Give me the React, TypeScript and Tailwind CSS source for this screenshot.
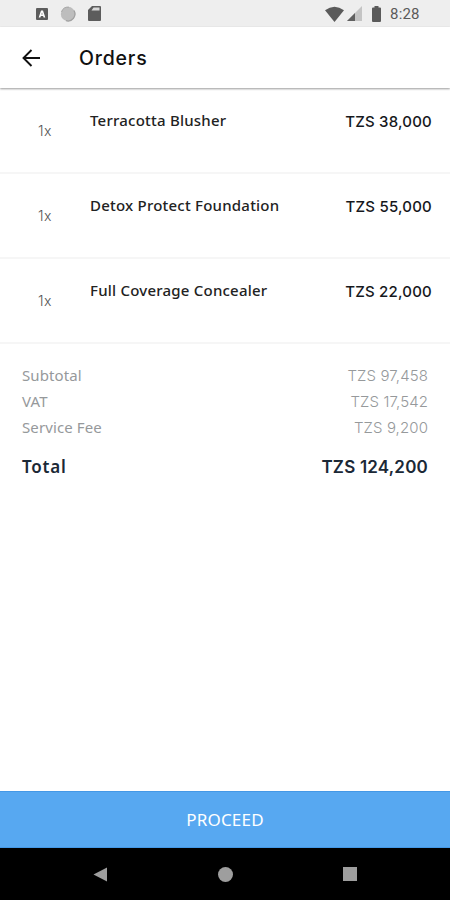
import React from 'react';

const formatPrice = (value: number) => `TZS ${value.toLocaleString('en-US')}`;

const items = [
  { name: 'Terracotta Blusher', qty: 1, price: 38000 },
  { name: 'Detox Protect Foundation', qty: 1, price: 55000 },
  { name: 'Full Coverage Concealer', qty: 1, price: 22000 },
];

const fees = [
  { label: 'Subtotal', value: 97458 },
  { label: 'VAT', value: 17542 },
  { label: 'Service Fee', value: 9200 },
];

function StatusBar() {
  return (
    <div className="flex h-[27px] shrink-0 items-center justify-between bg-[#eeeeee] pl-9 pr-[30px]">
      <div className="flex items-center">
        <svg width="12" height="12" viewBox="0 0 12 12">
          <rect width="12" height="12" rx="1" fill="#5c5c5c" />
          <path d="M2.7 9.5 5 2.5h2L9.3 9.5H7.6L7.1 8H4.9l-.5 1.5zM5.4 6.6h1.2L6 4.6z" fill="#fff" />
        </svg>
        <svg className="ml-[12px]" width="16" height="16" viewBox="0 0 16 16">
          <circle cx="8" cy="8" r="7.2" fill="#bdbdbd" />
          <path d="M14 4.5A7 7 0 0 1 6 14.7" fill="none" stroke="#a0a0a0" strokeWidth="1.3" />
          <path d="M1.5 6A7 7 0 0 1 9 1.2" fill="none" stroke="#a8a8a8" />
        </svg>
        <svg className="ml-[12px]" width="13" height="15" viewBox="0 0 13 15">
          <path d="M4 0h8q1 0 1 1v13q0 1-1 1H1q-1 0-1-1V4z" fill="#5c5c5c" />
          <path d="M5.5 1.5h6v3h-8z" fill="#d8d8d8" />
        </svg>
      </div>
      <div className="flex items-center">
        <svg width="19" height="16" viewBox="0 0 19 16">
          <path d="M0 4.2Q9.5-2.8 19 4.2L9.5 16z" fill="#5a5a5a" />
        </svg>
        <svg className="ml-[3px]" width="15" height="15" viewBox="0 0 15 15">
          <path d="M15 0v15H0z" fill="#c4c4c4" />
          <path d="M8 7v8H0z" fill="#606060" />
        </svg>
        <svg className="ml-[10px]" width="9" height="16" viewBox="0 0 9 16">
          <path d="M2.5 0h4v1.5H8q1 0 1 1V15q0 1-1 1H1q-1 0-1-1V2.5q0-1 1-1h1.5z" fill="#5a5a5a" />
        </svg>
        <span className="ml-[9px] mt-px w-[30px] whitespace-nowrap font-['Roboto',sans-serif] text-[15px] leading-none tracking-[0.2px] text-[#5a5a5a]">
          8:28
        </span>
      </div>
    </div>
  );
}

function Header() {
  return (
    <div className="relative flex h-[61px] shrink-0 items-center bg-white pl-[22px] shadow-[0_1px_2px_rgba(0,0,0,0.4)]">
      <svg width="18" height="18" viewBox="0 0 18 18" fill="none" stroke="#111" strokeWidth="1.9">
        <path d="M9.5 1 1.5 9l8 8M1.5 9H18" />
      </svg>
      <h1 className="ml-[39px] mt-[3px] font-['Inter',sans-serif] text-[19.5px] font-medium tracking-[0.8px] text-[#111]">Orders</h1>
    </div>
  );
}

function NavBar() {
  return (
    <div className="flex h-[52px] shrink-0 items-center justify-between bg-black px-[93px]">
      <svg width="14" height="15" viewBox="0 0 14 15">
        <path d="M14 .5v14L.5 7.5z" fill="#9e9e9e" />
      </svg>
      <div className="h-[15px] w-[15px] rounded-full bg-[#9e9e9e]" />
      <div className="h-3.5 w-3.5 bg-[#9e9e9e]" />
    </div>
  );
}

export default function App() {
  const total = fees.reduce((sum, fee) => sum + fee.value, 0);

  return (
    <div className="flex h-[900px] w-[450px] flex-col overflow-hidden bg-white font-['Noto_Sans',sans-serif]">
      <StatusBar />
      <Header />

      {/* Items */}
      <div className="flex flex-col pt-px">
        {items.map((item) => (
          <div key={item.name} className="flex h-[85px] items-start border-b-2 border-[#f6f6f6] pl-[38px] pr-[18px]">
            <span className="mt-[32px] w-[52px] font-['Inter',sans-serif] text-[14px] font-light leading-5 tracking-[0.5px] text-[#555]">{item.qty}x</span>
            <span className="mt-[21px] flex-1 whitespace-nowrap text-[15px] font-medium leading-5 tracking-[0.22px] text-[#222]">{item.name}</span>
            <span className="mt-[23px] whitespace-nowrap font-['Inter',sans-serif] text-[15px] font-medium leading-5 tracking-[0.2px] text-[#16181c]">
              {formatPrice(item.price)}
            </span>
          </div>
        ))}
      </div>

      {/* Totals */}
      <div className="flex flex-1 flex-col px-[22px] pt-[19px]">
        {fees.map((fee) => (
          <div key={fee.label} className="flex h-[26px] items-center justify-between text-[15px] text-[#96999b]">
            <span className="-mt-px tracking-[0.1px]">{fee.label}</span>
            <span className="font-['Inter',sans-serif] font-light tracking-[0.1px]">{formatPrice(fee.value)}</span>
          </div>
        ))}
        <div className="mt-[13px] flex h-[26px] items-center justify-between text-[#1b2836]">
          <span className="text-[17px] font-semibold tracking-[0.8px]">Total</span>
          <span className="mt-0.5 font-['Inter',sans-serif] text-[17px] font-semibold tracking-[0.2px]">{formatPrice(total)}</span>
        </div>
      </div>

      <button className="h-[57px] shrink-0 border-y border-[#4498e6] bg-[#57a8f1] text-[17px] tracking-[0.2px] text-white">PROCEED</button>
      <NavBar />
    </div>
  );
}
